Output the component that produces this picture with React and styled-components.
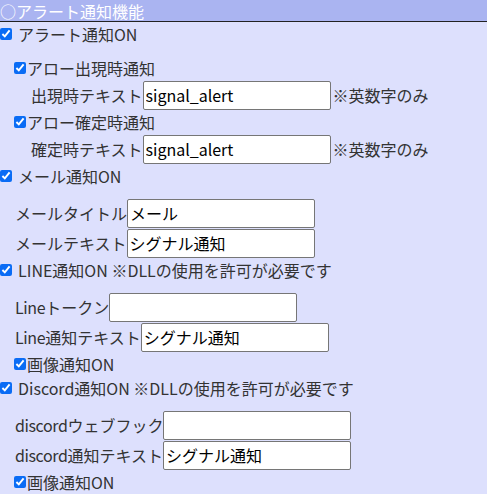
import React from 'react';
import styled, { createGlobalStyle } from 'styled-components';

const GlobalStyle = createGlobalStyle`
  html, body {
    margin: 0;
    padding: 0;
    background: #dde0fd;
  }
  body {
    font-family: "Noto Sans CJK JP", "Noto Sans", sans-serif;
    font-size: 16px;
    color: #333;
  }
`;

const Page = styled.div`
  width: 487px;
  height: 494px;
  overflow: hidden;
  background: #dde0fd;
`;

const Header = styled.div`
  height: 20px;
  padding-top: 1px;
  line-height: 20px;
  background: #aab4f1;
  color: #fff;
  border-bottom: 1px solid #222;
  font-size: 16px;
  white-space: nowrap;
`;

const CheckRow = styled.label`
  display: flex;
  align-items: center;
  height: 24px;
  padding-left: ${(p) => p.$indent || 0}px;
  white-space: nowrap;
`;

const Check = styled.input.attrs({ type: 'checkbox' })`
  width: 12px;
  height: 12px;
  margin: 0 ${(p) => p.$gap}px 0 0;
  accent-color: #0a6cf5;
  flex-shrink: 0;
`;

const Block = styled.div`
  padding-top: ${(p) => (p.$gap ? 10 : 0)}px;
`;

const FieldRow = styled.div`
  display: flex;
  align-items: center;
  height: 30px;
  padding-left: ${(p) => p.$indent}px;
  white-space: nowrap;
`;

const Latin = styled.span`
  letter-spacing: -0.4px;
`;

const TextBox = styled.input.attrs({ type: 'text' })`
  box-sizing: border-box;
  width: 188px;
  height: 29px;
  margin: 0;
  padding: 1px 2px;
  border: 1px solid #767676;
  border-radius: 2px;
  background: #fff;
  font-family: inherit;
  font-size: 16px;
  color: #000;
  outline: none;
`;

const Note = styled.span`
  margin-left: 2px;
`;

const TopCheck = ({ children }) => (
  <CheckRow>
    <Check $gap={6} defaultChecked />
    {children}
  </CheckRow>
);

const SubCheck = ({ children }) => (
  <CheckRow $indent={14}>
    <Check $gap={1} defaultChecked />
    {children}
  </CheckRow>
);

const Field = ({ indent, label, value, note }) => (
  <FieldRow $indent={indent}>
    {label}
    <TextBox defaultValue={value} />
    {note && <Note>{note}</Note>}
  </FieldRow>
);

const App = () => {
  return (
    <>
      <GlobalStyle />
      <Page>
        <Header>○アラート通知機能</Header>

        <TopCheck>アラート通知ON</TopCheck>
        <Block $gap>
          <SubCheck>アロー出現時通知</SubCheck>
          <Field indent={31} label="出現時テキスト" value="signal_alert" note="※英数字のみ" />
          <SubCheck>アロー確定時通知</SubCheck>
          <Field indent={31} label="確定時テキスト" value="signal_alert" note="※英数字のみ" />
        </Block>

        <TopCheck>メール通知ON</TopCheck>
        <Block $gap>
          <Field indent={15} label="メールタイトル" value="メール" />
          <Field indent={15} label="メールテキスト" value="シグナル通知" />
        </Block>

        <TopCheck>LINE通知ON ※DLLの使用を許可が必要です</TopCheck>
        <Block $gap>
          <Field indent={15} label={<><Latin>Line</Latin>トークン</>} value="" />
          <Field indent={15} label={<><Latin>Line</Latin>通知テキスト</>} value="シグナル通知" />
          <SubCheck>画像通知ON</SubCheck>
        </Block>

        <TopCheck>Discord通知ON ※DLLの使用を許可が必要です</TopCheck>
        <Block $gap>
          <Field indent={15} label={<><Latin>discord</Latin>ウェブフック</>} value="" />
          <Field indent={15} label={<><Latin>discord</Latin>通知テキスト</>} value="シグナル通知" />
          <SubCheck>画像通知ON</SubCheck>
        </Block>
      </Page>
    </>
  );
};

export default App;
